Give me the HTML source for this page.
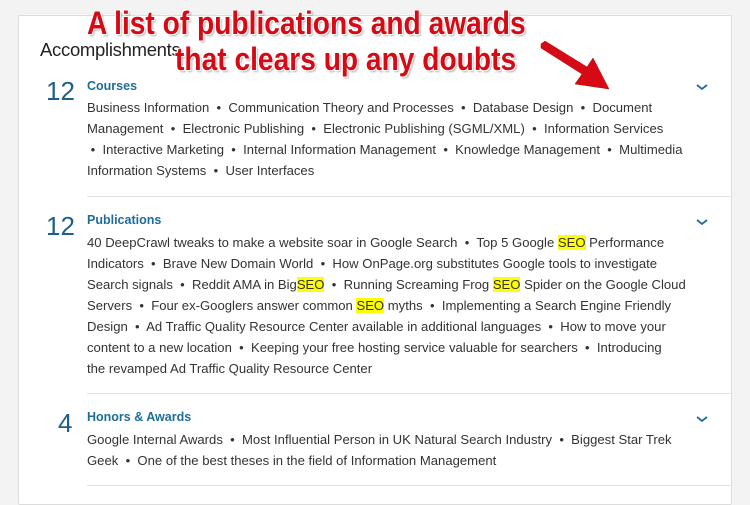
<!DOCTYPE html>
<html><head><meta charset="utf-8"><style>
*{margin:0;padding:0;box-sizing:border-box}
body{width:750px;height:488px;overflow:hidden;background:#f3f3f3;font-family:"Liberation Sans",sans-serif;position:relative}
.card{position:absolute;left:18px;top:15px;width:714px;height:490px;background:#fff;border:1px solid #dcdcdc;border-radius:2px}
.h{position:absolute;left:40px;top:39px;font-size:18.5px;color:#222;letter-spacing:-0.3px}
.num{position:absolute;font-size:26px;color:#1f5f87;font-weight:300}
.t{position:absolute;left:87px;font-size:12.5px;color:#1e6c99;font-weight:bold}
.l{position:absolute;left:87px;font-size:13.1px;color:#333;line-height:21px;white-space:nowrap}
.hr{position:absolute;left:87px;width:645px;height:1px;background:#e2e2e2}
.ch{position:absolute;left:696px;width:12px;height:8px}
mark{background:#ffff00;color:#333}
.ann{position:absolute;font-weight:bold;font-size:32px;color:#d60a14;white-space:nowrap;transform-origin:0 0;transform:scaleX(0.88);text-shadow:1px 1px 0 #fff,-1px -1px 0 #fff,1px -1px 0 #fff,-1px 1px 0 #fff,2px 2px 2px rgba(0,0,0,.3)}
</style></head><body>
<div class="card"></div>
<div class="h">Accomplishments</div>

<div class="num" style="left:46px;top:76px">12</div>
<div class="t" style="top:79px">Courses</div>
<svg class="ch" style="top:83px" viewBox="0 0 12 8"><path d="M1 2 L6 6 L11 2" stroke="#1e6c99" stroke-width="1.8" fill="none"/></svg>
<div class="l" style="top:97px">Business Information &nbsp;•&nbsp; Communication Theory and Processes &nbsp;•&nbsp; Database Design &nbsp;•&nbsp; Document<br>Management &nbsp;•&nbsp; Electronic Publishing &nbsp;•&nbsp; Electronic Publishing (SGML/XML) &nbsp;•&nbsp; Information Services<br>&nbsp;•&nbsp; Interactive Marketing &nbsp;•&nbsp; Internal Information Management &nbsp;•&nbsp; Knowledge Management &nbsp;•&nbsp; Multimedia<br>Information Systems &nbsp;•&nbsp; User Interfaces</div>
<div class="hr" style="top:196px"></div>

<div class="num" style="left:46px;top:211px">12</div>
<div class="t" style="top:213px">Publications</div>
<svg class="ch" style="top:218px" viewBox="0 0 12 8"><path d="M1 2 L6 6 L11 2" stroke="#1e6c99" stroke-width="1.8" fill="none"/></svg>
<div class="l" style="top:232px">40 DeepCrawl tweaks to make a website soar in Google Search &nbsp;•&nbsp; Top 5 Google <mark>SEO</mark> Performance<br>Indicators &nbsp;•&nbsp; Brave New Domain World &nbsp;•&nbsp; How OnPage.org substitutes Google tools to investigate<br>Search signals &nbsp;•&nbsp; Reddit AMA in Big<mark>SEO</mark> &nbsp;•&nbsp; Running Screaming Frog <mark>SEO</mark> Spider on the Google Cloud<br>Servers &nbsp;•&nbsp; Four ex-Googlers answer common <mark>SEO</mark> myths &nbsp;•&nbsp; Implementing a Search Engine Friendly<br>Design &nbsp;•&nbsp; Ad Traffic Quality Resource Center available in additional languages &nbsp;•&nbsp; How to move your<br>content to a new location &nbsp;•&nbsp; Keeping your free hosting service valuable for searchers &nbsp;•&nbsp; Introducing<br>the revamped Ad Traffic Quality Resource Center</div>
<div class="hr" style="top:393px"></div>

<div class="num" style="left:58px;top:408px">4</div>
<div class="t" style="top:410px">Honors &amp; Awards</div>
<svg class="ch" style="top:415px" viewBox="0 0 12 8"><path d="M1 2 L6 6 L11 2" stroke="#1e6c99" stroke-width="1.8" fill="none"/></svg>
<div class="l" style="top:429px">Google Internal Awards &nbsp;•&nbsp; Most Influential Person in UK Natural Search Industry &nbsp;•&nbsp; Biggest Star Trek<br>Geek &nbsp;•&nbsp; One of the best theses in the field of Information Management</div>
<div class="hr" style="top:485px"></div>

<div class="ann" style="left:87px;top:5px">A list of publications and awards</div>
<div class="ann" style="left:175px;top:41px">that clears up any doubts</div>
<svg style="position:absolute;left:0;top:0" width="750" height="488"><polygon points="541,44 545,41 587,67 593,58 609,89 575,84 582,74 541,48" fill="#d60a14" stroke="#b00" stroke-width="0.5"/></svg>
</body></html>
